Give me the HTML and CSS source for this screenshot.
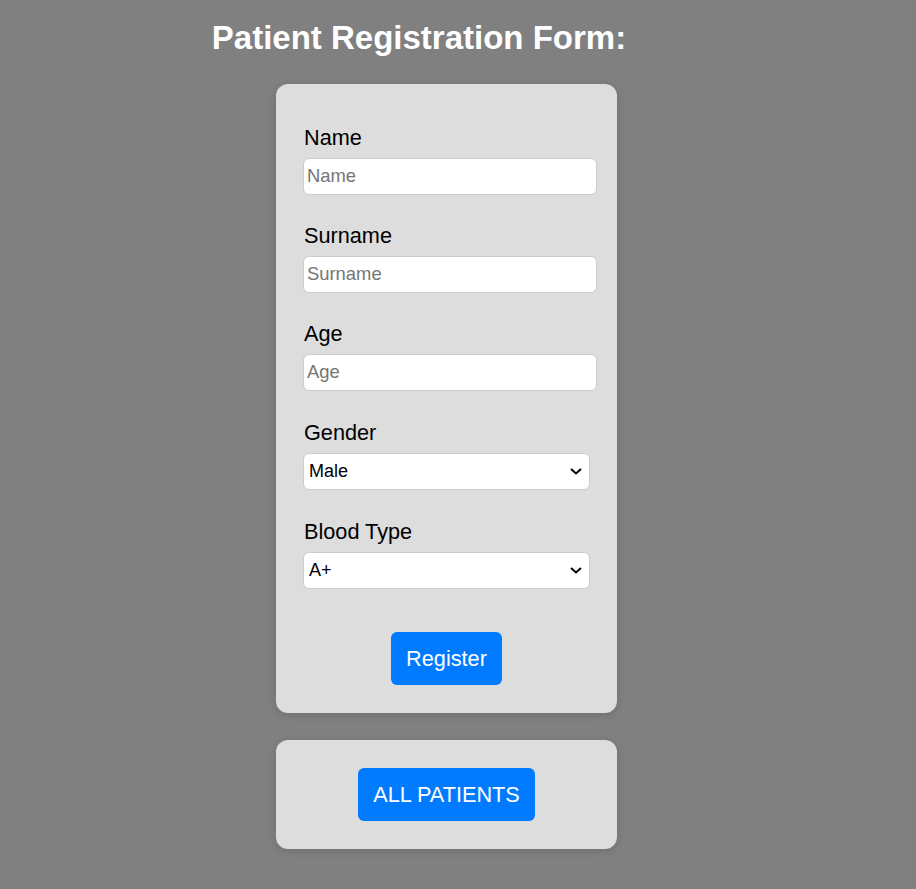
FILE: index.html
```html
<!DOCTYPE html>
<html lang="en">
<head>
<meta charset="utf-8">
<title>Patient Registration</title>
<link rel="stylesheet" href="styles.css">
</head>
<body>
<main class="page">
  <h1 class="title">Patient Registration Form:</h1>
  <form class="card form-card">
    <div class="field">
      <label class="label" for="name">Name</label>
      <input class="input" id="name" type="text" placeholder="Name">
    </div>
    <div class="field">
      <label class="label" for="surname">Surname</label>
      <input class="input" id="surname" type="text" placeholder="Surname">
    </div>
    <div class="field">
      <label class="label" for="age">Age</label>
      <input class="input" id="age" type="text" placeholder="Age">
    </div>
    <div class="field field-select">
      <label class="label" for="gender">Gender</label>
      <div class="select-wrap">
        <select class="select" id="gender">
          <option>Male</option>
          <option>Female</option>
        </select>
        <svg class="chevron" width="12" height="7" viewBox="0 0 12 7" aria-hidden="true"><path d="M1 1 L6 5.5 L11 1" fill="none" stroke="#000" stroke-width="2"/></svg>
      </div>
    </div>
    <div class="field field-select">
      <label class="label" for="blood">Blood Type</label>
      <div class="select-wrap">
        <select class="select" id="blood">
          <option>A+</option>
          <option>A-</option>
          <option>B+</option>
          <option>B-</option>
          <option>AB+</option>
          <option>AB-</option>
          <option>0+</option>
          <option>0-</option>
        </select>
        <svg class="chevron" width="12" height="7" viewBox="0 0 12 7" aria-hidden="true"><path d="M1 1 L6 5.5 L11 1" fill="none" stroke="#000" stroke-width="2"/></svg>
      </div>
    </div>
    <div class="actions">
      <button class="btn" type="button">Register</button>
    </div>
  </form>
  <div class="card link-card">
    <button class="btn" type="button">ALL PATIENTS</button>
  </div>
</main>
</body>
</html>
```

FILE: styles.css
```css
html, body {
  margin: 0;
  padding: 0;
}

body {
  background: #808080;
  font-family: "Liberation Sans", Arial, sans-serif;
  color: #000;
}

.page {
  display: flex;
  flex-direction: column;
  align-items: center;
  margin-right: 23px;
  padding-top: 19px;
  padding-bottom: 40px;
}

.title {
  margin: 0 0 28px 0;
  padding-right: 55px;
  align-self: stretch;
  text-align: center;
  color: #fff;
  font-size: 33px;
  font-weight: bold;
  line-height: 37px;
}

.card {
  box-sizing: border-box;
  width: 341px;
  background: #dddddd;
  border-radius: 12px;
  box-shadow: 0 2px 10px rgba(0, 0, 0, 0.15);
}

.form-card {
  display: flex;
  flex-direction: column;
  padding: 39px 20px 28px 27px;
}

.field {
  display: flex;
  flex-direction: column;
  align-items: flex-start;
  margin-bottom: 26.5px;
}

.field-select {
  margin-top: 1px;
}

.label {
  font-size: 21.7px;
  line-height: 24.5px;
  padding-top: 3px;
  margin-bottom: 7px;
  padding-left: 1px;
}

.input {
  box-sizing: border-box;
  width: 100%;
  height: 37px;
  margin: 0;
  padding: 0 3px;
  border: 1px solid #cccccc;
  border-radius: 6px;
  background: #fff;
  font-family: "Liberation Sans", Arial, sans-serif;
  font-size: 18.4px;
  color: #000;
  outline: none;
}

.input::placeholder {
  color: #757575;
}

.select-wrap {
  position: relative;
  width: 287px;
  height: 37px;
}

.select {
  box-sizing: border-box;
  display: block;
  width: 100%;
  height: 37px;
  margin: 0;
  padding: 0 24px 0 5px;
  border: 1px solid #cccccc;
  border-radius: 6px;
  background: #fff;
  font-family: "Liberation Sans", Arial, sans-serif;
  font-size: 18px;
  color: #000;
  appearance: none;
  -webkit-appearance: none;
  outline: none;
}

.chevron {
  position: absolute;
  right: 8px;
  top: 15px;
  pointer-events: none;
}

.actions {
  display: flex;
  justify-content: center;
  padding-right: 7px;
  margin-top: 16.5px;
}

.btn {
  margin: 0;
  padding: 14px 15px;
  border: none;
  border-radius: 6px;
  background: #007bff;
  color: #fff;
  font-family: "Liberation Sans", Arial, sans-serif;
  font-size: 21.7px;
  line-height: 25px;
  cursor: pointer;
}

.link-card {
  display: flex;
  justify-content: center;
  margin-top: 27px;
  padding: 28px;
}
```
